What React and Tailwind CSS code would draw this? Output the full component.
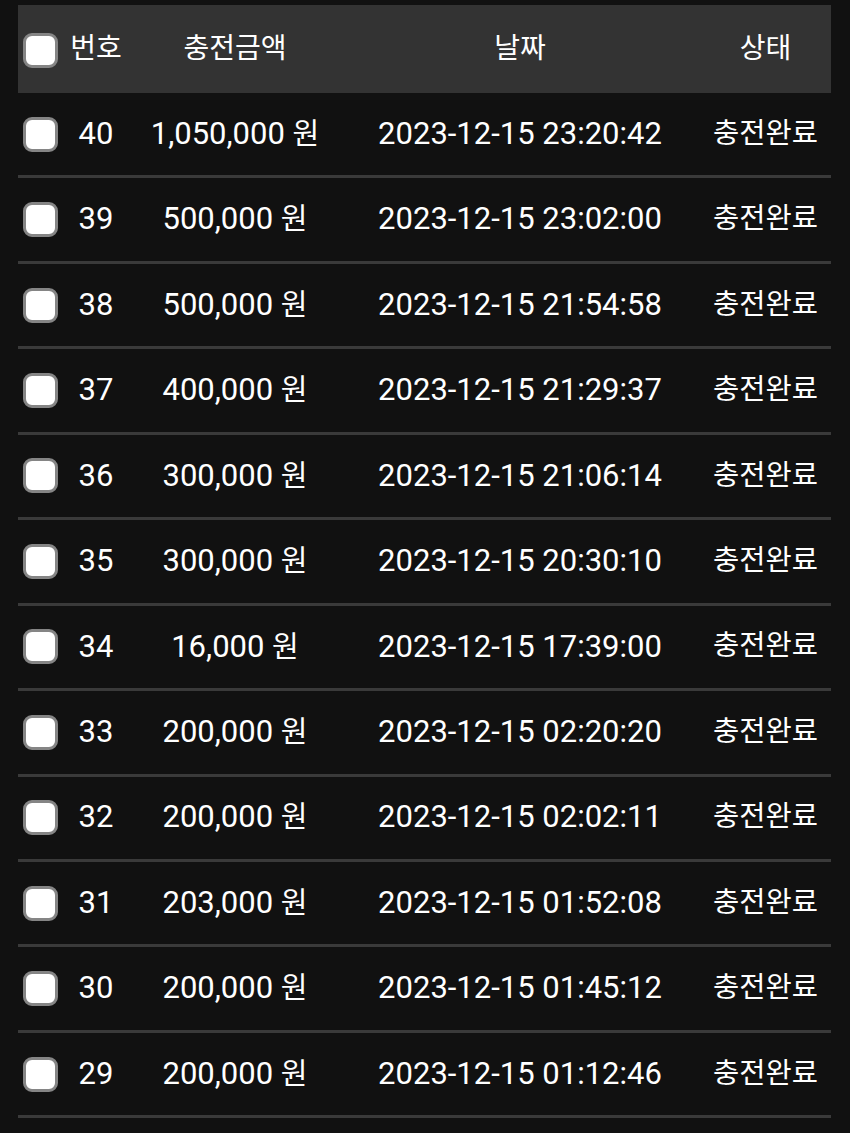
const rows = [
  { no: 40, amount: "1,050,000", date: "2023-12-15 23:20:42" },
  { no: 39, amount: "500,000", date: "2023-12-15 23:02:00" },
  { no: 38, amount: "500,000", date: "2023-12-15 21:54:58" },
  { no: 37, amount: "400,000", date: "2023-12-15 21:29:37" },
  { no: 36, amount: "300,000", date: "2023-12-15 21:06:14" },
  { no: 35, amount: "300,000", date: "2023-12-15 20:30:10" },
  { no: 34, amount: "16,000", date: "2023-12-15 17:39:00" },
  { no: 33, amount: "200,000", date: "2023-12-15 02:20:20" },
  { no: 32, amount: "200,000", date: "2023-12-15 02:02:11" },
  { no: 31, amount: "203,000", date: "2023-12-15 01:52:08" },
  { no: 30, amount: "200,000", date: "2023-12-15 01:45:12" },
  { no: 29, amount: "200,000", date: "2023-12-15 01:12:46" },
];

function Check() {
  return (
    <span className="block w-[35px] h-[35px] rounded-[9px] border-[3px] border-[#858585] bg-white" />
  );
}

const cols = "grid grid-cols-[44px_68px_210px_360px_1fr] items-center";

export default function App() {
  return (
    <div
      className="min-h-[1133px] bg-[#111111] pt-[5px] pl-[18px] pr-[19px] text-white"
      style={{ fontFamily: 'Roboto, "Noto Sans CJK KR", sans-serif' }}
    >
      <div className={`${cols} h-[88px] bg-[#333333] text-[28px]`}>
        <div className="pl-[5px] pt-[2px]">
          <Check />
        </div>
        <div className="text-center">번호</div>
        <div className="text-center">충전금액</div>
        <div className="text-center">날짜</div>
        <div className="text-center">상태</div>
      </div>
      {rows.map((r) => (
        <div
          key={r.no}
          className={`${cols} h-[85.45px] border-b-[3px] border-[#3a3a3a] text-[31px]`}
        >
          <div className="pl-[5px]">
            <Check />
          </div>
          <div className="text-center">{r.no}</div>
          <div className="text-center">
            {r.amount} <span className="text-[29px]">원</span>
          </div>
          <div className="text-center">{r.date}</div>
          <div className="text-center text-[28.5px]">충전완료</div>
        </div>
      ))}
    </div>
  );
}
